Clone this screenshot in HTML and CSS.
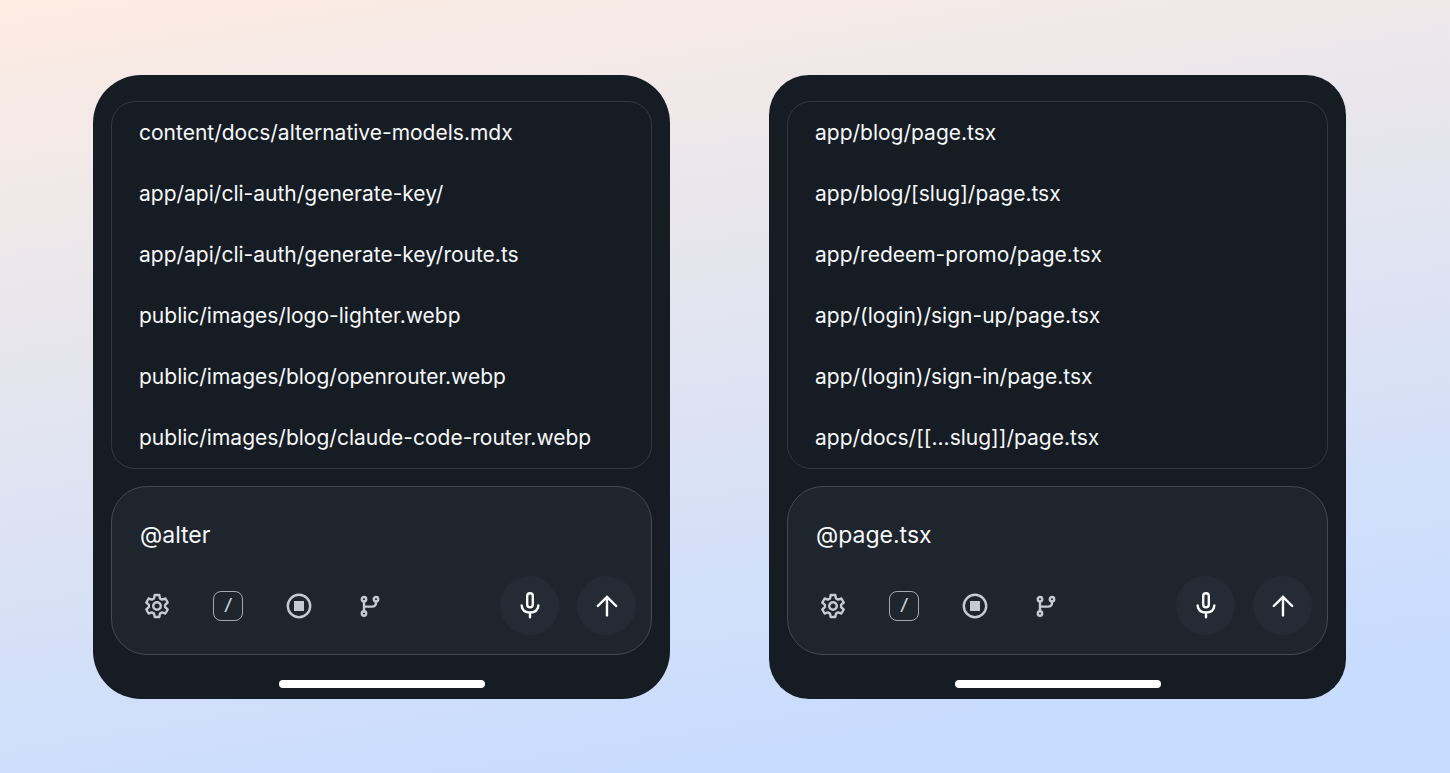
FILE: index.html
```html
<!DOCTYPE html>
<html lang="en">
<head>
  <meta charset="UTF-8" />
  <meta name="viewport" content="width=device-width, initial-scale=1.0"/>
  <title>File mentions</title>
  <link rel="stylesheet" href="styles.css">
</head>
<body>
  <!-- icons shared by both phones -->
  <svg class="sprite" aria-hidden="true">
    <symbol id="icon-gear" viewBox="-15 -15 30 30">
      <path d="M-2.3-11H2.3L3-7.6 5.1-6.4 8.4-7.5 10.7-3.5 8.1-1.2V1.2L10.7 3.5 8.4 7.5 5.1 6.4 3 7.6 2.3 11H-2.3L-3 7.6-5.1 6.4-8.4 7.5-10.7 3.5-8.1 1.2V-1.2L-10.7-3.5-8.4-7.5-5.1-6.4-3-7.6Z"/>
      <circle r="3.8"/>
    </symbol>
    <symbol id="icon-stop" viewBox="-15 -15 30 30">
      <circle r="11.2"/>
      <rect x="-5" y="-5" width="10" height="10" fill="currentColor" stroke="none"/>
    </symbol>
    <symbol id="icon-branch" viewBox="-15 -15 30 30">
      <circle cx="-6" cy="-6.8" r="2.2"/>
      <circle cx="6" cy="-6.8" r="2.2"/>
      <circle cx="-6" cy="7.5" r="2.2"/>
      <path d="M-6-4.6V5.3M6-4.6V-3Q6 .6 2 .6H-6"/>
    </symbol>
    <symbol id="icon-mic" viewBox="-15 -15 30 30">
      <rect x="-2.8" y="-12.8" width="5.6" height="14.2" rx="2.8"/>
      <path d="M-8.4-.6C-8 4-4.6 6.5 0 6.5S8 4 8.4-.6M0 6.5V11.2"/>
    </symbol>
    <symbol id="icon-send" viewBox="-15 -15 30 30">
      <path d="M0 9.4V-9.2M-9.2 0 0-9.2 9.2 0"/>
    </symbol>
  </svg>

  <main class="stage">
    <section class="phone">
      <ul class="files">
        <li><button type="button">content/docs/alternative-models.mdx</button></li>
        <li><button type="button">app/api/cli-auth/generate-key/</button></li>
        <li><button type="button">app/api/cli-auth/generate-key/route.ts</button></li>
        <li><button type="button">public/images/logo-lighter.webp</button></li>
        <li><button type="button">public/images/blog/openrouter.webp</button></li>
        <li><button type="button">public/images/blog/claude-code-router.webp</button></li>
      </ul>
      <form class="composer">
        <input class="prompt" type="text" value="@alter" aria-label="Message">
        <div class="toolbar">
          <button type="button" class="tool" aria-label="Settings"><svg><use href="#icon-gear"/></svg></button>
          <button type="button" class="tool slash" aria-label="Commands">/</button>
          <button type="button" class="tool" aria-label="Stop"><svg><use href="#icon-stop"/></svg></button>
          <button type="button" class="tool" aria-label="Branch"><svg><use href="#icon-branch"/></svg></button>
          <div class="actions">
            <button type="button" class="round" aria-label="Dictate"><svg><use href="#icon-mic"/></svg></button>
            <button type="button" class="round" aria-label="Send"><svg><use href="#icon-send"/></svg></button>
          </div>
        </div>
      </form>
      <div class="home-bar"></div>
    </section>

    <section class="phone phone-tight">
      <ul class="files">
        <li><button type="button">app/blog/page.tsx</button></li>
        <li><button type="button">app/blog/[slug]/page.tsx</button></li>
        <li><button type="button">app/redeem-promo/page.tsx</button></li>
        <li><button type="button">app/(login)/sign-up/page.tsx</button></li>
        <li><button type="button">app/(login)/sign-in/page.tsx</button></li>
        <li><button type="button">app/docs/[[...slug]]/page.tsx</button></li>
      </ul>
      <form class="composer">
        <input class="prompt" type="text" value="@page.tsx" aria-label="Message">
        <div class="toolbar">
          <button type="button" class="tool" aria-label="Settings"><svg><use href="#icon-gear"/></svg></button>
          <button type="button" class="tool slash" aria-label="Commands">/</button>
          <button type="button" class="tool" aria-label="Stop"><svg><use href="#icon-stop"/></svg></button>
          <button type="button" class="tool" aria-label="Branch"><svg><use href="#icon-branch"/></svg></button>
          <div class="actions">
            <button type="button" class="round" aria-label="Dictate"><svg><use href="#icon-mic"/></svg></button>
            <button type="button" class="round" aria-label="Send"><svg><use href="#icon-send"/></svg></button>
          </div>
        </div>
      </form>
      <div class="home-bar"></div>
    </section>
  </main>
</body>
</html>
```
FILE: styles.css
```css
:root {
  --phone-bg: #161c23;
  --panel-bg: #1f252d;
  --round-bg: #252b35;
  --line: #323840;
  --line-strong: #444a52;
  --text: #f6f8fa;
  --icon: #c5cbd3;
}

* {
  box-sizing: border-box;
  margin: 0;
  padding: 0;
}

body {
  font-family: Inter, "Liberation Sans", sans-serif;
  background: linear-gradient(171deg, #feece2 0%, #ebe7eb 28%, #c8dcff 87%);
  color: var(--text);
  min-height: 100vh;
}

button,
input {
  font: inherit;
  color: inherit;
  background: none;
  border: none;
}

button {
  cursor: pointer;
}

.sprite {
  position: absolute;
  width: 0;
  height: 0;
}

.stage {
  display: grid;
  grid-template-columns: 1fr 1fr;
  gap: 99px;
  padding: 75px 104px 74px 93px;
}

.phone {
  display: flex;
  flex-direction: column;
  min-width: 0;
  padding: 26px 18px 11px;
  background: var(--phone-bg);
  border-radius: 48px;
}

.phone-tight {
  border-radius: 40px;
}

.files {
  list-style: none;
  border: 1px solid var(--line);
  border-radius: 24px;
  overflow: hidden;
}

.files button {
  display: block;
  width: 100%;
  padding: 0 27px;
  font-size: 21px;
  line-height: 61px;
  text-align: left;
}

.files button:hover {
  background: var(--panel-bg);
}

.composer {
  margin-top: 17px;
  padding: 30px 15px 19px 28px;
  background: var(--panel-bg);
  border: 1px solid var(--line-strong);
  border-radius: 36px;
}

.prompt {
  display: block;
  width: 100%;
  height: 36px;
  font-size: 23px;
  outline: none;
}

.toolbar {
  display: flex;
  align-items: center;
  gap: 41px;
  margin-top: 23px;
  padding-left: 2px;
}

.toolbar svg {
  display: block;
  width: 30px;
  height: 30px;
  fill: none;
  stroke: currentColor;
  stroke-width: 2.4;
  stroke-linecap: round;
  stroke-linejoin: round;
}

.tool {
  width: 30px;
  height: 30px;
  color: var(--icon);
}

.slash {
  border: 1px solid #a3a9b1;
  border-radius: 8px;
  font-size: 16px;
  font-style: italic;
  font-weight: 600;
  line-height: 24px;
  padding-bottom: 4px;
}

.actions {
  display: flex;
  gap: 18px;
  margin-left: auto;
}

.round {
  display: grid;
  place-items: center;
  width: 59px;
  height: 59px;
  border-radius: 50%;
  background: var(--round-bg);
  color: #fff;
}

.home-bar {
  align-self: center;
  width: 206px;
  height: 8px;
  margin-top: 25px;
  border-radius: 4px;
  background: #fff;
}

@media (max-width: 1100px) {
  .stage {
    grid-template-columns: 1fr;
    gap: 40px;
    padding: 40px 24px;
  }

  .toolbar {
    gap: 24px;
  }
}
```
